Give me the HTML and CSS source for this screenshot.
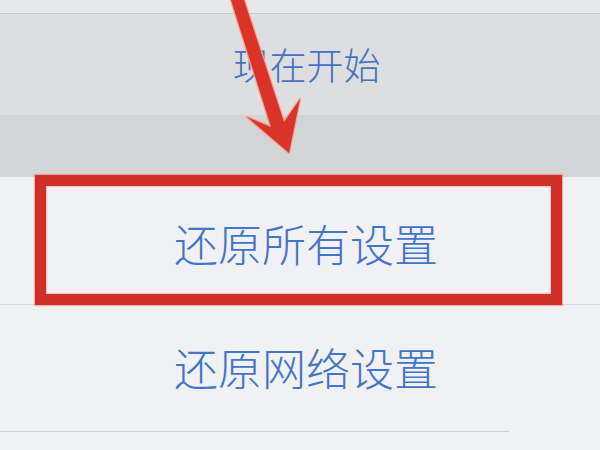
FILE: index.html
```html
<!DOCTYPE html>
<html lang="zh-CN">
<head>
<meta charset="utf-8">
<title>还原设置</title>
<link rel="stylesheet" href="styles.css">
</head>
<body>
<div class="screen">
  <div class="top-strip"></div>
  <div class="card"><span class="label label-start">现在开始</span></div>
  <div class="band"></div>
  <div class="list">
    <div class="row row-all">
      <span class="label">还原所有设置</span>
      <div class="highlight"></div>
    </div>
    <div class="row row-net">
      <span class="label">还原网络设置</span>
    </div>
  </div>
  <svg class="arrow" width="600" height="450" viewBox="0 0 600 450" aria-hidden="true">
    <polygon class="arrow-glow" points="231,0 244,0 284,122 300,99 289,153 247,117 271,127"/>
    <polygon class="arrow-body" points="231,0 244,0 284,122 300,99 289,153 247,117 271,127"/>
  </svg>
</div>
</body>
</html>
```
FILE: styles.css
```css
html, body {
  margin: 0;
  padding: 0;
}
body {
  width: 600px;
  height: 450px;
  overflow: hidden;
  background: #f0f1f5;
  font-family: "Noto Sans CJK SC", "Noto Sans", sans-serif;
}
.screen {
  position: relative;
  width: 600px;
  height: 450px;
  display: flex;
  flex-direction: column;
}
.top-strip {
  height: 13px;
  background: #e7e8ea;
  border-bottom: 1px solid #c9cacc;
}
.card {
  height: 101px;
  background: #dddee0;
  display: flex;
  align-items: center;
  justify-content: center;
  padding-left: 13px;
}
.band {
  height: 62px;
  background: #d3d4d6;
}
.list {
  background: #f0f1f5;
  flex: 1;
}
.label {
  color: #4275c8;
  font-size: 44px;
  line-height: 1;
  font-weight: 300;
  white-space: nowrap;
}
.label-start {
  font-size: 37px;
  color: #4472c0;
}
.row {
  position: relative;
  box-sizing: border-box;
  display: flex;
  align-items: center;
  justify-content: center;
  padding-left: 12px;
}
.row-all {
  height: 128px;
  padding-top: 5px;
  border-bottom: 1px solid #d5d6da;
}
.row-net {
  height: 127px;
  width: 509px;
  padding-left: 103px;
  padding-bottom: 2px;
  border-bottom: 1px solid #cfd0d4;
}
.highlight {
  position: absolute;
  left: 35px;
  top: -2px;
  width: 527px;
  height: 130px;
  box-sizing: border-box;
  border: 11px solid #d02f28;
  box-shadow: 0 0 1px 1px rgba(230, 120, 110, 0.5), inset 0 0 1px 1px rgba(240, 150, 140, 0.5);
}
.arrow {
  position: absolute;
  left: 0;
  top: 0;
}
.arrow-glow {
  fill: none;
  stroke: #f0a59c;
  stroke-width: 2.5;
  stroke-linejoin: round;
}
.arrow-body {
  fill: #dc3328;
}
```
